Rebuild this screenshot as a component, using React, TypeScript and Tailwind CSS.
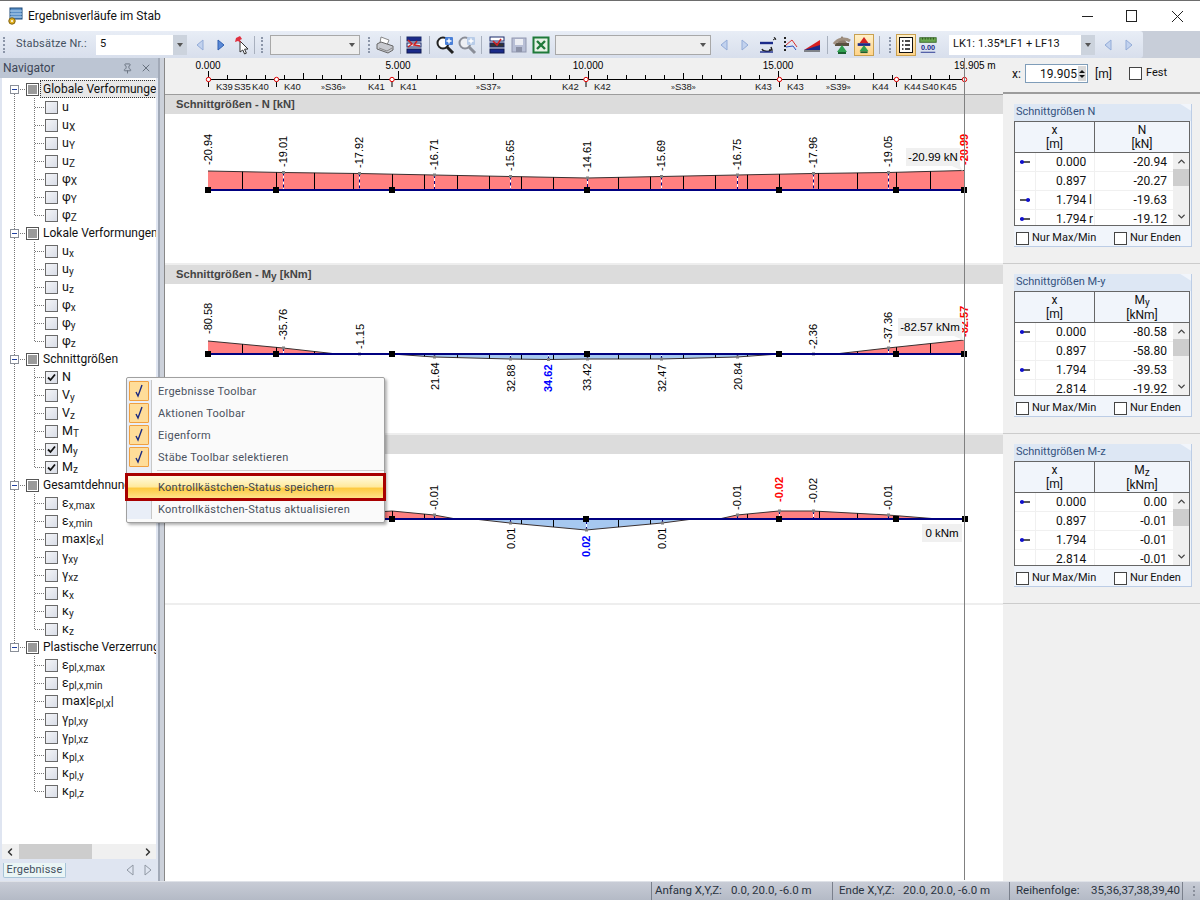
import { ChevronDown, ChevronLeft, ChevronRight, ChevronUp, Pin, X } from "lucide-react";
import type { ReactNode } from "react";

type TreeItem = { main: string; sub?: string; tail?: string; checked?: boolean };
type TreeGroup = { title: string; selected?: boolean; children: TreeItem[] };

const tree: TreeGroup[] = [
  {
    title: "Globale Verformunge",
    selected: true,
    children: [
      { main: "u" },
      { main: "u", sub: "X" },
      { main: "u", sub: "Y" },
      { main: "u", sub: "Z" },
      { main: "φ", sub: "X" },
      { main: "φ", sub: "Y" },
      { main: "φ", sub: "Z" },
    ],
  },
  {
    title: "Lokale Verformungen",
    children: [
      { main: "u", sub: "x" },
      { main: "u", sub: "y" },
      { main: "u", sub: "z" },
      { main: "φ", sub: "x" },
      { main: "φ", sub: "y" },
      { main: "φ", sub: "z" },
    ],
  },
  {
    title: "Schnittgrößen",
    children: [
      { main: "N", checked: true },
      { main: "V", sub: "y" },
      { main: "V", sub: "z" },
      { main: "M", sub: "T" },
      { main: "M", sub: "y", checked: true },
      { main: "M", sub: "z", checked: true },
    ],
  },
  {
    title: "Gesamtdehnung",
    children: [
      { main: "ε", sub: "x,max" },
      { main: "ε", sub: "x,min" },
      { main: "max|ε", sub: "x", tail: "|" },
      { main: "γ", sub: "xy" },
      { main: "γ", sub: "xz" },
      { main: "κ", sub: "x" },
      { main: "κ", sub: "y" },
      { main: "κ", sub: "z" },
    ],
  },
  {
    title: "Plastische Verzerrung",
    children: [
      { main: "ε", sub: "pl,x,max" },
      { main: "ε", sub: "pl,x,min" },
      { main: "max|ε", sub: "pl,x", tail: "|" },
      { main: "γ", sub: "pl,xy" },
      { main: "γ", sub: "pl,xz" },
      { main: "κ", sub: "pl,x" },
      { main: "κ", sub: "pl,y" },
      { main: "κ", sub: "pl,z" },
    ],
  },
];

// Chart data is in page pixels, each svg uses a viewBox offset to match
type Pt = [number, number];
type Label = [number, number, string, ("red" | "blue")?];
type ChartData = {
  top: number;
  base: number;
  regions: { fill: string; pts: Pt[] }[];
  hatches: number[];
  nodes: number[];
  labels: Label[];
  marks: Pt[];
  tip: { x: number; y: number; w: number; text: string; tail?: boolean };
};

const charts: ChartData[] = [
  {
    top: 114,
    base: 190,
    regions: [
      {
        fill: "#ff8080",
        pts: [[208, 171], [283, 172.5], [359, 173.5], [434, 175], [510, 176.5], [587, 178], [661, 176.5], [737, 175], [813, 173.5], [888, 172.5], [964, 170.5]],
      },
    ],
    hatches: [242, 276, 314, 353, 392, 424, 457, 489, 521, 553, 587, 618, 650, 683, 715, 747, 779, 818, 857, 896, 930],
    nodes: [208, 276, 392, 587, 779, 896, 964],
    labels: [
      [212, 165, "-20.94"], [287, 167, "-19.01"], [363, 168, "-17.92"], [438, 170, "-16.71"], [514, 171, "-15.65"],
      [591, 172, "-14.61"], [665, 171, "-15.69"], [741, 170, "-16.75"], [817, 168, "-17.96"], [892, 167, "-19.05"],
      [968, 165, "-20.99", "red"],
    ],
    marks: [[283, 172.5], [359, 173.5], [434, 175], [510, 176.5], [587, 178], [661, 176.5], [737, 175], [813, 173.5], [888, 172.5]],
    tip: { x: 906, y: 148, w: 54, text: "-20.99 kN", tail: true },
  },
  {
    top: 284,
    base: 354,
    regions: [
      { fill: "#ff8080", pts: [[208, 341], [283, 348], [337, 354]] },
      { fill: "#a6c8f0", pts: [[392, 354], [434, 357], [510, 359], [548, 359.5], [587, 359], [661, 359], [737, 357], [779, 354]] },
      { fill: "#ff8080", pts: [[835, 354], [888, 348], [964, 340]] },
    ],
    hatches: [242, 276, 314, 424, 457, 489, 521, 553, 587, 618, 650, 683, 715, 747, 857, 896, 930],
    nodes: [208, 276, 392, 587, 779, 896, 964],
    labels: [
      [212, 334, "-80.58"], [287, 340, "-35.76"], [364, 349, "-1.15"], [439, 390, "21.64"], [515, 392, "32.88"],
      [552, 392, "34.62", "blue"], [591, 391, "33.42"], [666, 392, "32.47"], [742, 390, "20.84"], [817, 349, "-2.36"],
      [892, 343, "-37.36"], [968, 337, "-82.57", "red"],
    ],
    marks: [[283, 348], [359, 354], [434, 357], [510, 359], [548, 359.5], [587, 359], [661, 359], [737, 357], [813, 354], [888, 348]],
    tip: { x: 898, y: 318, w: 64, text: "-82.57 kNm", tail: true },
  },
  {
    top: 454,
    base: 519,
    regions: [
      { fill: "#ff8080", pts: [[270, 519], [392, 511], [434, 515], [456, 519]] },
      { fill: "#a6c8f0", pts: [[474, 519], [510, 523], [586, 530], [662, 523], [693, 519]] },
      { fill: "#ff8080", pts: [[719, 519], [737, 515], [779, 511], [813, 511], [888, 515], [938, 519]] },
    ],
    hatches: [392, 424, 521, 553, 618, 650, 747, 819, 857],
    nodes: [208, 276, 392, 586, 779, 896, 965],
    labels: [
      [438, 510, "-0.01"], [515, 549, "0.01"], [590, 557, "0.02", "blue"], [666, 549, "0.01"], [741, 510, "-0.01"],
      [783, 502, "-0.02", "red"], [817, 503, "-0.02"], [892, 510, "-0.01"],
    ],
    marks: [[434, 515], [510, 523], [586, 530], [662, 523], [737, 515], [779, 511], [813, 511], [888, 515]],
    tip: { x: 922, y: 524, w: 40, text: "0 kNm" },
  },
];

function yAt(pts: Pt[], x: number) {
  for (let i = 0; i < pts.length - 1; i++) {
    const [x1, y1] = pts[i];
    const [x2, y2] = pts[i + 1];
    if (x >= x1 && x <= x2) return y1 + ((y2 - y1) * (x - x1)) / (x2 - x1);
  }
  return null;
}

function Chart({ data }: { data: ChartData }) {
  const { base } = data;
  return (
    <svg width={838} height={149} viewBox={`165 ${data.top} 838 149`} className="block bg-white font-['Liberation_Sans',sans-serif]">
      {data.regions.map((r, i) => (
        <g key={i}>
          <polygon points={[...r.pts, [r.pts[r.pts.length - 1][0], base], [r.pts[0][0], base]].map((p) => p.join(",")).join(" ")} fill={r.fill} />
          <polyline points={r.pts.map((p) => p.join(",")).join(" ")} fill="none" stroke="#3a3030" strokeWidth={1} />
          {data.hatches.map((x) => {
            const y = yAt(r.pts, x);
            return y === null ? null : <line key={x} x1={x + 0.5} x2={x + 0.5} y1={y} y2={base} stroke="#000" strokeWidth={1} />;
          })}
        </g>
      ))}
      {data.marks.map(([x, y]) => (
        <g key={x}>
          <line x1={x + 0.5} x2={x + 0.5} y1={y} y2={base} stroke="#fff" strokeWidth={1} />
          <line x1={x + 0.5} x2={x + 0.5} y1={y} y2={base} stroke="#000080" strokeWidth={1} strokeDasharray="3 3" />
          <rect x={x - 1} y={y - 1.5} width={3} height={3} fill="#808080" />
        </g>
      ))}
      <line x1={208} x2={965} y1={base} y2={base} stroke="#000080" strokeWidth={2} />
      {data.nodes.map((x) => (
        <rect key={x} x={x - 3} y={base - 3} width={6} height={6} fill="#000" />
      ))}
      {data.labels.map(([x, y, t, kind]) => (
        <text
          key={t + x}
          x={x}
          y={y}
          transform={`rotate(-90 ${x} ${y})`}
          fontSize={11}
          fontWeight={kind ? 700 : 400}
          fill={kind === "red" ? "#ff0000" : kind === "blue" ? "#0000ff" : "#000"}
        >
          {t}
        </text>
      ))}
      <rect x={data.tip.x} y={data.tip.y} width={data.tip.w} height={18} fill="#f0f0f0" />
      {data.tip.tail && <polygon points={`${data.tip.x + data.tip.w - 8},${data.tip.y + 18} ${data.tip.x + data.tip.w},${data.tip.y + 18} ${data.tip.x + data.tip.w + 3},${data.tip.y + 23}`} fill="#f0f0f0" />}
      <text x={data.tip.x + data.tip.w / 2} y={data.tip.y + 13} textAnchor="middle" fontSize={11.5} fill="#000">
        {data.tip.text}
      </text>
    </svg>
  );
}

const rulerNodes = [208.5, 276.5, 392, 586, 779.5, 896.5];
const rulerLabels: [number, string][] = [
  [216, "K39"], [234, "S35"], [252, "K40"], [284, "K40"], [368, "K41"], [400, "K41"], [562, "K42"], [594, "K42"],
  [755, "K43"], [787, "K43"], [872, "K44"], [904, "K44"], [922, "S40"], [940, "K45"],
];
const rulerBars: [number, string][] = [[321, "S36"], [476, "S37"], [671, "S38"], [826, "S39"]];

function Ruler() {
  const ticks = Array.from({ length: 40 }, (_, i) => 208.5 + i * 19);
  return (
    <svg width={838} height={36} viewBox="165 58 838 36" className="block font-['Liberation_Sans',sans-serif]">
      <line x1={208} x2={965} y1={79.5} y2={79.5} stroke="#000" />
      {ticks.map((x, i) => (
        <line key={x} x1={x} x2={x} y1={i % 10 === 0 ? 71 : i % 5 === 0 ? 73 : 75} y2={79} stroke="#000" />
      ))}
      {[["0.000", 208], ["5.000", 398], ["10.000", 588], ["15.000", 778]].map(([t, x]) => (
        <text key={t} x={x} y={69} textAnchor="middle" fontSize={10} fill="#000">
          {t}
        </text>
      ))}
      <text x={954} y={69} fontSize={10} fill="#000">
        19.905 m
      </text>
      {rulerNodes.map((x) => (
        <g key={x}>
          <line x1={x} x2={x} y1={79} y2={87} stroke="#000" />
          <circle cx={x} cy={79.5} r={2.2} fill="#fff" stroke="#e00000" />
        </g>
      ))}
      <line x1={964.5} x2={964.5} y1={79} y2={94} stroke="#000" />
      <circle cx={964.5} cy={79.5} r={2.2} fill="#fff" stroke="#e00000" />
      {rulerLabels.map(([x, t]) => (
        <text key={t + x} x={x} y={90} fontSize={9.5} fill="#202020">
          {t}
        </text>
      ))}
      {rulerBars.map(([x, t]) => (
        <text key={t} x={x} y={90} fontSize={9.5} fill="#202020">
          <tspan fontSize={7}>»</tspan>
          {t}
          <tspan fontSize={7}>»</tspan>
        </text>
      ))}
    </svg>
  );
}

function Grip({ className = "" }: { className?: string }) {
  return <span className={`h-[16px] w-[3px] shrink-0 border-l-2 border-dotted border-[#8b95a8] ${className}`} />;
}

function Sep({ className = "" }: { className?: string }) {
  return <span className={`h-[18px] w-px shrink-0 bg-[#a8b0be] ${className}`} />;
}

function Slot({ className = "", children }: { className?: string; children: ReactNode }) {
  return <span className={`flex h-[22px] w-[20px] shrink-0 items-center justify-center ${className}`}>{children}</span>;
}

function Combo({ className, text, disabled }: { className: string; text?: string; disabled?: boolean }) {
  return (
    <div className={`flex h-[20px] shrink-0 items-center ${disabled ? "border border-[#a8a8a8] bg-[#eeeeee]" : "bg-white"} ${className}`}>
      <span className="flex-1 truncate pl-[4px] text-[11px] tracking-[0.1px] text-[#111]">{text}</span>
      <span className={`flex h-full w-[14px] items-center justify-center ${disabled ? "" : "bg-[#ccd3dd]"}`}>
        <span className="h-0 w-0 border-x-[3px] border-t-[4px] border-x-transparent border-t-[#555]" />
      </span>
    </div>
  );
}

function Arrow({ dir, strong }: { dir: "l" | "r"; strong?: boolean }) {
  return (
    <svg width={12} height={14} viewBox="0 0 12 14">
      <polygon
        points={dir === "l" ? "9,2 3,7 9,12" : "3,2 9,7 3,12"}
        fill={strong ? "#5b8ad8" : "#c2d2ee"}
        stroke={strong ? "#2f5fb0" : "#93acd8"}
      />
    </svg>
  );
}

function IconPick() {
  return (
    <svg width={18} height={20} viewBox="0 0 18 20">
      <path d="M6 6l8 8-3.4.2 1.8 4-1.8.8-1.8-4L6 17z" fill="#fff" stroke="#333" />
      <path d="M2 3l4-2 2 3-2 1 1 3-3-2-3 1z" fill="#e03040" />
    </svg>
  );
}

function IconPrint() {
  return (
    <svg width={18} height={18} viewBox="0 0 18 18">
      <path d="M5 1l8 3-2 5-7-2z" fill="#fff" stroke="#888" />
      <path d="M1 8l4-2 12 4v4l-5 3-11-4z" fill="#c8cad0" stroke="#666" />
      <path d="M3 12l8 3 5-3" fill="none" stroke="#888" />
    </svg>
  );
}

function IconStack({ variant }: { variant: "a" | "b" }) {
  return (
    <svg width={18} height={18} viewBox="0 0 18 18">
      <rect x={2} y={1} width={14} height={4} fill={variant === "a" ? "#1a2a8a" : "#fff"} stroke="#1a2a6a" />
      <rect x={2} y={7} width={14} height={4} fill={variant === "a" ? "#e8e8f0" : "#333"} stroke="#1a2a6a" />
      <rect x={2} y={13} width={14} height={4} fill="#1a2a8a" stroke="#101a50" />
      <path d={variant === "a" ? "M3 4l4 4-4 3M12 5l-3 4 6 1" : "M5 5l4 4 4-6"} fill="none" stroke="#d02020" strokeWidth={1.5} />
    </svg>
  );
}

function IconZoom({ active }: { active?: boolean }) {
  const c = active ? "#222" : "#8a8e98";
  return (
    <svg width={20} height={20} viewBox="0 0 20 20">
      <circle cx={8} cy={8} r={5.5} fill={active ? "#fff" : "#eef0f4"} stroke={c} strokeWidth={2} />
      <path d="M12 12l6 6" stroke={c} strokeWidth={3} />
      <rect x={10} y={2} width={8} height={8} rx={1} fill={active ? "#4a80d8" : "#b8cce8"} />
      <path d="M14 3.5v5M11.5 6h5" stroke="#fff" strokeWidth={1.4} />
    </svg>
  );
}

function IconSave() {
  return (
    <svg width={18} height={18} viewBox="0 0 18 18">
      <rect x={2} y={2} width={14} height={14} fill="#b8bfd6" stroke="#9298b0" />
      <rect x={5} y={3} width={8} height={6} fill="#eceef4" />
      <rect x={6} y={11} width={6} height={5} fill="#8c92a8" />
    </svg>
  );
}

function IconExcel() {
  return (
    <svg width={18} height={18} viewBox="0 0 18 18">
      <rect x={1.5} y={1.5} width={15} height={15} fill="#e6f2e6" stroke="#1f7a3a" strokeWidth={2} />
      <path d="M5 5l8 8M13 5l-8 8" stroke="#1f7a3a" strokeWidth={2.4} />
    </svg>
  );
}

function IconRotate() {
  return (
    <svg width={20} height={18} viewBox="0 0 20 18">
      <path d="M2 7h13" stroke="#1a2a8a" strokeWidth={2.4} />
      <path d="M15 4l3-2M16 1l2 3" stroke="#222" />
      <path d="M4 13a5 3 0 0 0 9 1M13 11l1 3-3 0" fill="none" stroke="#222" strokeWidth={1.4} />
      <path d="M2 16h13" stroke="#1a2a8a" strokeWidth={1.4} />
    </svg>
  );
}

function IconScatter() {
  return (
    <svg width={20} height={18} viewBox="0 0 20 18">
      <path d="M5 1v16" stroke="#222" strokeDasharray="2 2" strokeWidth={2} />
      <path d="M6 9l6-5 5 7" fill="none" stroke="#d83030" />
      <path d="M6 11l7-1 3 4" fill="none" stroke="#2a50c0" />
    </svg>
  );
}

function IconRamp() {
  return (
    <svg width={20} height={18} viewBox="0 0 20 18">
      <polygon points="2,14 18,4 18,13" fill="#d82020" />
      <polygon points="2,14 18,9 18,14" fill="#1a2a8a" />
      <path d="M2 15h16" stroke="#222" />
    </svg>
  );
}

function IconShape({ active }: { active?: boolean }) {
  return (
    <svg width={20} height={20} viewBox="0 0 20 20">
      <polygon points="10,1 15,8 5,8" fill={active ? "#d02020" : "#8a7a6a"} />
      <rect x={3} y={8} width={14} height={3} fill={active ? "#1a2a8a" : "#5a5040"} />
      {!active && <path d="M2 9c4-6 12-6 16-3" stroke="#a09080" strokeWidth={3} fill="none" />}
      <polygon points="10,10 15,17 5,17" fill="#30a050" />
      <rect x={6} y={17} width={8} height={2} fill="#1a6030" />
    </svg>
  );
}

function IconTable() {
  return (
    <svg width={16} height={18} viewBox="0 0 16 18">
      <rect x={1.5} y={1.5} width={13} height={15} fill="#fff" stroke="#111" />
      <path d="M4 5h1.5M7 5h5M4 9h1.5M7 9h5M4 13h1.5M7 13h5" stroke="#111" strokeWidth={1.4} />
    </svg>
  );
}

function IconScale() {
  return (
    <svg width={22} height={20} viewBox="0 0 22 20">
      <rect x={2} y={2} width={18} height={5} fill="#6aa84f" stroke="#3a6a2a" />
      <path d="M5 2v2M8 2v2M11 2v2M14 2v2M17 2v2" stroke="#2a4a1a" />
      <text x={11} y={16} textAnchor="middle" fontSize={8} fontWeight={700} fill="#1a2a8a" className="font-['Liberation_Sans',sans-serif]">
        0.00
      </text>
      <path d="M3 18h16" stroke="#1a2a8a" />
    </svg>
  );
}

function IconApp() {
  return (
    <svg width={16} height={18} viewBox="0 0 16 18">
      <rect x={3} y={1} width={12} height={11} fill="#5a90c8" stroke="#1e4a78" />
      <path d="M3 4h12M3 7h12M3 10h12" stroke="#bcd8f0" />
      <circle cx={5} cy={14} r={3.2} fill="#e0b020" stroke="#806010" />
      <circle cx={5} cy={14} r={1} fill="#fff" />
    </svg>
  );
}

function ActiveBox({ children, className = "" }: { children: ReactNode; className?: string }) {
  return (
    <span className={`flex h-[22px] w-[20px] shrink-0 items-center justify-center border border-[#c8a050] bg-[linear-gradient(to_bottom,#fff0c8,#ffd48a)] ${className}`}>
      {children}
    </span>
  );
}

function Toolbar() {
  return (
    <div className="flex h-[27px] shrink-0 bg-[#c8ced9]">
      <div className="flex h-full w-[1143px] items-center rounded-r-[3px] bg-[linear-gradient(to_bottom,#e8edf6,#d8dfec)]">
        <Grip className="ml-[3px]" />
        <span className="ml-[10px] w-[70px] shrink-0 whitespace-nowrap text-[11px] tracking-[0.2px] text-[#44505f]">Stabsätze Nr.:</span>
        <Combo className="ml-[10px] w-[91px]" text="5" />
        <Slot className="ml-[3px]"><Arrow dir="l" /></Slot>
        <Slot className="ml-px"><Arrow dir="r" strong /></Slot>
        <Slot className="ml-[2px]"><IconPick /></Slot>
        <Sep className="ml-px" />
        <Grip className="ml-[6px]" />
        <Combo className="ml-[6px] w-[90px]" disabled />
        <Grip className="ml-[8px]" />
        <Slot className="ml-[4px]"><IconPrint /></Slot>
        <Sep className="ml-[5px]" />
        <Slot className="ml-[3px]"><IconStack variant="a" /></Slot>
        <Sep className="ml-[5px]" />
        <Slot className="ml-[5px]"><IconZoom active /></Slot>
        <Slot className="ml-[2px]"><IconZoom /></Slot>
        <Sep className="ml-[4px]" />
        <Slot className="ml-[5px]"><IconStack variant="b" /></Slot>
        <Slot className="ml-[2px]"><IconSave /></Slot>
        <Slot className="ml-[2px]"><IconExcel /></Slot>
        <Combo className="ml-[4px] w-[156px]" disabled />
        <Slot className="ml-[3px]"><Arrow dir="l" /></Slot>
        <Slot className="ml-px"><Arrow dir="r" /></Slot>
        <Slot className="ml-[3px]"><IconRotate /></Slot>
        <Slot className="ml-[2px]"><IconScatter /></Slot>
        <Slot className="ml-[2px]"><IconRamp /></Slot>
        <Sep className="ml-[5px]" />
        <Slot className="ml-[4px]"><IconShape /></Slot>
        <ActiveBox className="ml-[2px]"><IconShape active /></ActiveBox>
        <Sep className="ml-[5px]" />
        <Grip className="ml-[9px]" />
        <ActiveBox className="ml-[4px]"><IconTable /></ActiveBox>
        <Slot className="ml-[2px]"><IconScale /></Slot>
        <Combo className="ml-[11px] w-[146px]" text="LK1: 1.35*LF1 + LF13" />
        <Slot className="ml-[3px]"><Arrow dir="l" /></Slot>
        <Slot className="ml-px"><Arrow dir="r" /></Slot>
      </div>
    </div>
  );
}

function CheckMark() {
  return (
    <svg width={11} height={11} viewBox="0 0 11 11">
      <path d="M2 5.5l2.5 2.5L9 2.5" fill="none" stroke="#111" strokeWidth={1.8} />
    </svg>
  );
}

function Check({ checked, className = "" }: { checked?: boolean; className?: string }) {
  return (
    <span className={`flex h-[13px] w-[13px] shrink-0 items-center justify-center border border-[#6a6a6a] bg-[linear-gradient(135deg,#f4f5f8,#d9dde7)] ${className}`}>
      {checked && <CheckMark />}
    </span>
  );
}

function TopConnector({ first, last }: { first: boolean; last: boolean }) {
  return (
    <svg width={24} height={18} viewBox="2 0 24 18" className="shrink-0">
      {!first && <line x1={14.5} x2={14.5} y1={0} y2={5} stroke="#777" strokeDasharray="1 1" />}
      {!last && <line x1={14.5} x2={14.5} y1={14} y2={18} stroke="#777" strokeDasharray="1 1" />}
      <line x1={20} x2={26} y1={9.5} y2={9.5} stroke="#777" strokeDasharray="1 1" />
      <rect x={10.5} y={5.5} width={8} height={8} fill="#fff" stroke="#8a8f98" />
      <line x1={12} x2={17} y1={9.5} y2={9.5} stroke="#2040a0" />
    </svg>
  );
}

function ChildConnector({ groupLast, itemLast }: { groupLast: boolean; itemLast: boolean }) {
  return (
    <svg width={43} height={18} viewBox="2 0 43 18" className="shrink-0">
      {!groupLast && <line x1={14.5} x2={14.5} y1={0} y2={18} stroke="#777" strokeDasharray="1 1" />}
      <line x1={34.5} x2={34.5} y1={0} y2={itemLast ? 9 : 18} stroke="#777" strokeDasharray="1 1" />
      <line x1={35} x2={45} y1={9.5} y2={9.5} stroke="#777" strokeDasharray="1 1" />
    </svg>
  );
}

function Navigator() {
  return (
    <div className="flex w-[158px] shrink-0 flex-col bg-[#dfe5f1]">
      <div className="flex h-[20px] shrink-0 items-center bg-[#bcc5d3] pl-[3px] pr-[6px] text-[12px] text-[#3c4656]">
        <span className="flex-1">Navigator</span>
        <Pin size={11} className="mr-[7px] text-[#68727f]" />
        <X size={12} className="text-[#68727f]" />
      </div>
      <div className="ml-[2px] flex h-[766px] w-[154px] shrink-0 flex-col overflow-hidden bg-white pt-[2px]">
        {tree.map((group, gi) => (
          <div key={group.title}>
            <div className="flex h-[18px] items-center whitespace-nowrap">
              <TopConnector first={gi === 0} last={gi === tree.length - 1} />
              <span className="flex h-[13px] w-[13px] shrink-0 items-center justify-center border border-[#555] bg-white">
                <span className="h-[9px] w-[9px] bg-[#9a9a9a]" />
              </span>
              <span className={`ml-px pl-[2px] text-[12px] leading-[16px] text-[#111] ${group.selected ? "w-[118px] border border-dotted border-[#333] bg-[#e8e8e8]" : "border border-transparent"}`}>
                {group.title}
              </span>
            </div>
            {group.children.map((item, i) => (
              <div key={i} className="flex h-[18px] items-center whitespace-nowrap">
                <ChildConnector groupLast={gi === tree.length - 1} itemLast={i === group.children.length - 1} />
                <Check checked={item.checked} />
                <span className="ml-[4px] text-[12.5px] text-[#111]">
                  {item.main}
                  {item.sub && <span className="relative top-[2px] text-[10px] text-[#222]">{item.sub}</span>}
                  {item.tail}
                </span>
              </div>
            ))}
          </div>
        ))}
      </div>
      <div className="ml-[2px] flex h-[15px] w-[154px] shrink-0 items-center bg-[#f0f0f0] text-[#333]">
        <ChevronLeft size={12} strokeWidth={3} className="ml-[2px] shrink-0" />
        <span className="ml-[3px] h-full w-[73px] bg-[#cdcdcd]" />
        <ChevronRight size={12} strokeWidth={3} className="ml-auto mr-[2px]" />
      </div>
      <div className="flex h-[21px] shrink-0 items-start pl-[3px] pt-[4px]">
        <span className="flex h-[15px] w-[63px] items-center justify-center rounded-b-[2px] border border-t-0 border-[#a8c4d8] bg-[#eaf5f5] text-[11px] tracking-[0.2px] text-[#44505f]">
          Ergebnisse
        </span>
        <span className="ml-[59px] mt-[1px] flex gap-[8px]">
          <svg width={10} height={12} viewBox="0 0 10 12">
            <polygon points="8,1 2,6 8,11" fill="none" stroke="#9098a4" />
          </svg>
          <svg width={10} height={12} viewBox="0 0 10 12">
            <polygon points="2,1 8,6 2,11" fill="none" stroke="#9098a4" />
          </svg>
        </span>
      </div>
    </div>
  );
}

function Section({ title, data }: { title: ReactNode; data: ChartData }) {
  return (
    <div>
      <div className="flex h-[19px] items-center bg-[#dcdcdc] pl-[11px] font-['Liberation_Sans',sans-serif] text-[11.2px] font-bold text-[#444]">
        {title}
      </div>
      <Chart data={data} />
      <div className="h-[2px] bg-[#eeeeee]" />
    </div>
  );
}

type Row = { x: string; v: string; icon?: "l" | "r" };

const panels: { title: string; head: ReactNode; unit: string; rows: Row[] }[] = [
  {
    title: "Schnittgrößen N",
    head: "N",
    unit: "[kN]",
    rows: [
      { x: "0.000", v: "-20.94", icon: "l" },
      { x: "0.897", v: "-20.27" },
      { x: "1.794 l", v: "-19.63", icon: "r" },
      { x: "1.794 r", v: "-19.12", icon: "l" },
    ],
  },
  {
    title: "Schnittgrößen M-y",
    head: <>M<span className="relative top-[2px] text-[10px]">y</span></>,
    unit: "[kNm]",
    rows: [
      { x: "0.000", v: "-80.58", icon: "l" },
      { x: "0.897", v: "-58.80" },
      { x: "1.794", v: "-39.53", icon: "l" },
      { x: "2.814", v: "-19.92" },
    ],
  },
  {
    title: "Schnittgrößen M-z",
    head: <>M<span className="relative top-[2px] text-[10px]">z</span></>,
    unit: "[kNm]",
    rows: [
      { x: "0.000", v: "0.00", icon: "l" },
      { x: "0.897", v: "-0.01" },
      { x: "1.794", v: "-0.01", icon: "l" },
      { x: "2.814", v: "-0.01" },
    ],
  },
];

function RowIcon({ dir }: { dir: "l" | "r" }) {
  return (
    <svg width={12} height={6} viewBox="0 0 12 6">
      <line x1={1} x2={11} y1={3} y2={3} stroke="#111" strokeWidth={1.4} />
      <circle cx={dir === "l" ? 3 : 9} cy={3} r={2} fill="#1010d0" />
    </svg>
  );
}

function ResultPanel({ panel }: { panel: (typeof panels)[number] }) {
  return (
    <div className="h-[170px] shrink-0 border-b border-[#cccccc] pl-[11px] pt-[10px]">
      <div className="h-[143px] w-[178px] border-b border-r border-[#bccde6] bg-[#f1f5fb]">
        <div className="flex h-[17px] items-center bg-[#dde7f4] pl-[2px] text-[11px] text-[#34527e] [clip-path:polygon(0_0,94%_0,100%_40%,100%_100%,0_100%)]">
          {panel.title}
        </div>
        <div className="w-[176px] border border-[#666] text-[12px] text-[#111]">
          <div className="flex h-[31px] border-b border-[#666] bg-[#f1f5fb] text-center leading-[14px]">
            <div className="w-[80px] border-r border-[#666] pt-[1px]">
              x<br />[m]
            </div>
            <div className="flex-1 pt-[1px]">
              {panel.head}
              <br />
              {panel.unit}
            </div>
          </div>
          <div className="flex h-[72px] overflow-hidden bg-white">
            <div className="w-[158px] shrink-0">
              {panel.rows.map((r) => (
                <div key={r.x} className="flex h-[19px] items-center border-b border-[#f0f0f0]">
                  <span className="flex w-[21px] shrink-0 items-center justify-center self-stretch border-r border-[#f0f0f0]">
                    {r.icon && <RowIcon dir={r.icon} />}
                  </span>
                  <span className="w-[59px] shrink-0 self-stretch whitespace-nowrap border-r border-[#f0f0f0] pl-[20px] leading-[19px]">{r.x}</span>
                  <span className="flex-1 pr-[6px] text-right">{r.v}</span>
                </div>
              ))}
            </div>
            <div className="flex w-[16px] shrink-0 flex-col items-center bg-[#f0f0f0] text-[#444]">
              <ChevronUp size={11} strokeWidth={3} className="mt-[3px]" />
              <span className="mt-[2px] h-[17px] w-full bg-[#cdcdcd]" />
              <ChevronDown size={11} strokeWidth={3} className="mb-[3px] mt-auto" />
            </div>
          </div>
        </div>
        <div className="flex h-[24px] items-center pl-[2px] text-[11px] text-[#111]">
          <span className="h-[13px] w-[13px] shrink-0 border border-[#444] bg-white" />
          <span className="ml-[3px] w-[82px] shrink-0">Nur Max/Min</span>
          <span className="h-[13px] w-[13px] shrink-0 border border-[#444] bg-white" />
          <span className="ml-[3px]">Nur Enden</span>
        </div>
      </div>
    </div>
  );
}

function RightPane() {
  return (
    <div className="flex w-[197px] shrink-0 flex-col bg-[#f0f0f0]">
      <div className="flex h-[36px] shrink-0 items-center border-b-2 border-[#9c9c9c] pb-[3px] pl-[9px] text-[12px] text-[#111]">
        <span className="w-[13px]">x:</span>
        <div className="flex h-[19px] w-[63px] items-center border border-[#7f9db9] bg-white">
          <span className="flex-1 text-right">19.905</span>
          <span className="ml-px mr-px flex h-[15px] w-[8px] flex-col items-center justify-center gap-[2px] bg-[#d8d8d8]">
            <span className="h-0 w-0 border-x-[3px] border-b-[3px] border-x-transparent border-b-[#111]" />
            <span className="h-0 w-0 border-x-[3px] border-t-[3px] border-x-transparent border-t-[#111]" />
          </span>
        </div>
        <span className="ml-[7px] w-[14px]">[m]</span>
        <span className="ml-[20px] h-[13px] w-[13px] border border-[#444] bg-white" />
        <span className="ml-[4px] text-[11px]">Fest</span>
      </div>
      {panels.map((p) => (
        <ResultPanel key={p.title} panel={p} />
      ))}
    </div>
  );
}

const menuTop = ["Ergebnisse Toolbar", "Aktionen Toolbar", "Eigenform", "Stäbe Toolbar selektieren"];

function ContextMenu() {
  return (
    <div className="absolute left-[126px] top-[377px] h-[146px] w-[259px] rounded-[2px] border border-[#a0a0a0] bg-[#fafafa] pt-[2px] text-[11px] tracking-[0.27px] text-[#4a5260] shadow-[2px_2px_3px_rgba(0,0,0,0.3)]">
      {menuTop.map((t) => (
        <div key={t} className="flex h-[22px] items-center">
          <span className="flex h-full w-[25px] shrink-0 items-center justify-center border-r border-[#c8c8c8] bg-[#e9eef7]">
            <span className="flex h-[20px] w-[20px] items-center justify-center rounded-[1px] border border-[#f0a040] bg-[#ffdd99]">
              <svg width={12} height={14} viewBox="0 0 12 14">
                <path d="M3 8l2 4L9 1" fill="none" stroke="#1a2a80" strokeWidth={1.4} />
              </svg>
            </span>
          </span>
          <span className="ml-[6px] pt-[2px]">{t}</span>
        </div>
      ))}
      <div className="flex h-[5px]">
        <span className="h-full w-[25px] shrink-0 border-r border-[#c8c8c8] bg-[#e9eef7]" />
        <span className="ml-[5px] mt-[2px] h-px flex-1 bg-[#d0d0d0]" />
      </div>
      <div className="relative -mx-[2px] flex h-[28px] items-center border-[3px] border-[#a80000] bg-[linear-gradient(to_bottom,#fffbe0_0%,#ffe99c_50%,#fdc93f_55%,#ffe38a_100%)] pl-[30px] pt-[2px] text-[#3c4450]">
        Kontrollkästchen-Status speichern
      </div>
      <div className="flex h-[18px] items-center">
        <span className="h-full w-[25px] shrink-0 border-r border-[#c8c8c8] bg-[#e9eef7]" />
        <span className="ml-[6px]">Kontrollkästchen-Status aktualisieren</span>
      </div>
    </div>
  );
}

export default function App() {
  return (
    <div className="relative flex h-[900px] w-[1200px] flex-col overflow-hidden bg-white font-['Roboto',sans-serif]">
      {/* Titelleiste */}
      <div className="flex h-[31px] shrink-0 items-center border-t border-[#6d6d6d] bg-white pl-[7px]">
        <IconApp />
        <span className="ml-[5px] flex-1 text-[12px] text-[#111]">Ergebnisverläufe im Stab</span>
        <svg width={118} height={14} viewBox="0 0 118 14">
          <line x1={0} x2={11} y1={7.5} y2={7.5} stroke="#222" />
          <rect x={44.5} y={1.5} width={10} height={11} fill="none" stroke="#222" />
          <path d="M90 2l11 11M101 2l-11 11" stroke="#222" />
        </svg>
      </div>

      <Toolbar />

      <div className="flex h-[823px] shrink-0">
        <Navigator />
        <div className="w-[7px] shrink-0 border-l-2 border-r border-l-[#a2aab8] border-r-[#888] bg-[#ccd1da]" />

        <div className="flex w-[838px] shrink-0 flex-col bg-white">
          <div className="h-[37px] shrink-0 border-b-0 bg-[#f0f0f0]">
            <Ruler />
            <div className="h-px bg-[#9c9c9c]" />
          </div>
          <Section title="Schnittgrößen - N [kN]" data={charts[0]} />
          <Section
            title={<>Schnittgrößen - M<span className="relative top-[2px] text-[10px]">y</span>&nbsp;[kNm]</>}
            data={charts[1]}
          />
          <Section
            title={<>Schnittgrößen - M<span className="relative top-[2px] text-[10px]">z</span>&nbsp;[kNm]</>}
            data={charts[2]}
          />
        </div>

        <RightPane />
      </div>

      {/* Statusleiste */}
      <div className="flex h-[19px] shrink-0 items-center border-t border-[#dfe2e8] bg-[linear-gradient(to_bottom,#c8ccd6,#b4bac6)] text-[11.5px] text-[#2a3340]">
        <span className="ml-[651px] h-full w-px bg-[#7a808c]" />
        <span className="ml-[3px] w-[76px] shrink-0">Anfang X,Y,Z:</span>
        <span className="w-[101px] shrink-0">0.0, 20.0, -6.0 m</span>
        <span className="h-full w-px bg-[#7a808c]" />
        <span className="ml-[6px] w-[64px] shrink-0">Ende X,Y,Z:</span>
        <span className="w-[106px] shrink-0">20.0, 20.0, -6.0 m</span>
        <span className="h-full w-px bg-[#7a808c]" />
        <span className="ml-[6px] w-[75px] shrink-0">Reihenfolge:</span>
        <span className="w-[91px] shrink-0">35,36,37,38,39,40</span>
        <span className="h-full w-px bg-[#7a808c]" />
        <span className="ml-[6px] h-[10px] w-[6px] border-r-2 border-dotted border-[#8a909c]" />
      </div>

      {/* Cursor-Linie über den Diagrammen */}
      <div className="absolute left-[964px] top-[58px] h-[822px] w-px bg-[#808080]" />
      <ContextMenu />
    </div>
  );
}
